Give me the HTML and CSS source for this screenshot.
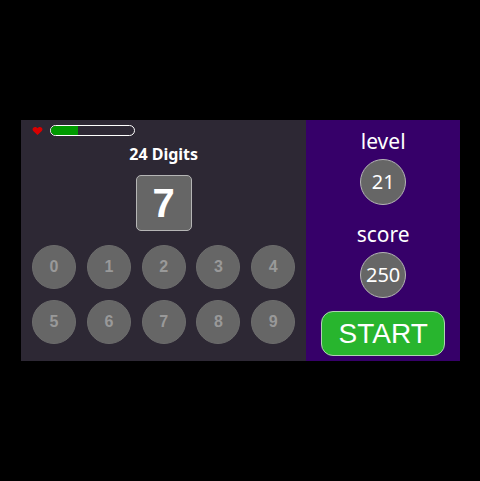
FILE: index.html
```html
<!DOCTYPE html>
<html lang="en">
<head>
<meta charset="utf-8">
<title>24 Digits</title>
<link rel="stylesheet" href="styles.css">
</head>
<body>
<main class="game">
  <section class="board">
    <div class="status">
      <svg class="heart" viewBox="0 0 10 8" aria-hidden="true"><path d="M5 8 L0.7 4.1 C-0.9 2.1 0.6 0 2.6 0 C3.8 0 4.6 0.6 5 1.3 C5.4 0.6 6.2 0 7.4 0 C9.4 0 10.9 2.1 9.3 4.1 Z"/></svg>
      <div class="life" role="img" aria-label="Life"><div class="life-fill" style="width: 33%"></div></div>
    </div>
    <h1 class="title">24 Digits</h1>
    <div class="digit">7</div>
    <div class="keys">
      <button class="key" disabled>0</button>
      <button class="key" disabled>1</button>
      <button class="key" disabled>2</button>
      <button class="key" disabled>3</button>
      <button class="key" disabled>4</button>
      <button class="key" disabled>5</button>
      <button class="key" disabled>6</button>
      <button class="key" disabled>7</button>
      <button class="key" disabled>8</button>
      <button class="key" disabled>9</button>
    </div>
  </section>
  <aside class="side">
    <div class="stat">
      <h2 class="label">level</h2>
      <div class="value">21</div>
    </div>
    <div class="stat">
      <h2 class="label">score</h2>
      <div class="value">250</div>
    </div>
    <button class="start">START</button>
  </aside>
</main>
</body>
</html>
```
FILE: styles.css
```css
* { box-sizing: border-box; }
body {
  margin: 0;
  min-height: 100vh;
  padding: 0 20px 0 21px;
  display: flex;
  align-items: center;
  background: #000;
  color: #fff;
  font-family: "Noto Sans", sans-serif;
}
.game {
  flex: 1;
  display: grid;
  grid-template-columns: 65fr 35fr;
}
.board {
  display: flex;
  flex-direction: column;
  align-items: center;
  padding: 5px 11px 17px;
  background: #2d2834;
}
.status {
  align-self: stretch;
  display: flex;
  align-items: center;
  gap: 7px;
}
.heart { width: 11px; height: 8px; fill: #d90000; }
.life {
  width: 30%;
  min-width: 85px;
  height: 11px;
  border: 1px solid #fff;
  border-radius: 6px;
  overflow: hidden;
}
.life-fill { height: 100%; background: #090; }
.title {
  margin: 6px 0 9px;
  font-size: 16px;
  line-height: 24px;
  font-weight: 700;
}
.digit {
  width: 56px;
  height: 56px;
  display: grid;
  place-items: center;
  border: 1px solid #b5b5b5;
  border-radius: 5px;
  background: #666;
  font: 700 40px/1 "Liberation Sans", Arial, sans-serif;
}
.keys {
  align-self: stretch;
  margin-top: 14px;
  display: grid;
  grid-template-columns: repeat(5, 44px);
  justify-content: space-between;
  row-gap: 11px;
}
.key {
  height: 44px;
  padding: 0;
  border: 1px solid #6c6c6c;
  border-radius: 50%;
  background: #666;
  color: #999;
  font: 700 16px "Liberation Sans", Arial, sans-serif;
}
.side {
  display: flex;
  flex-direction: column;
  align-items: center;
  justify-content: space-between;
  padding: 5px 15px;
  background: #360069;
}
.stat { display: flex; flex-direction: column; align-items: center; }
.label {
  margin: 0 0 2px;
  font-size: 21px;
  line-height: 32px;
  font-weight: 400;
}
.value {
  width: 46px;
  height: 46px;
  display: grid;
  place-items: center;
  border: 1px solid #b5b5b5;
  border-radius: 50%;
  background: #666;
  font-size: 20px;
  line-height: 1;
}
.start {
  width: 100%;
  height: 45px;
  padding: 0;
  border: 1px solid #b0d0b4;
  border-radius: 12px;
  background: #28b52e;
  color: #fff;
  font: 28px "Liberation Sans", Arial, sans-serif;
}
```
